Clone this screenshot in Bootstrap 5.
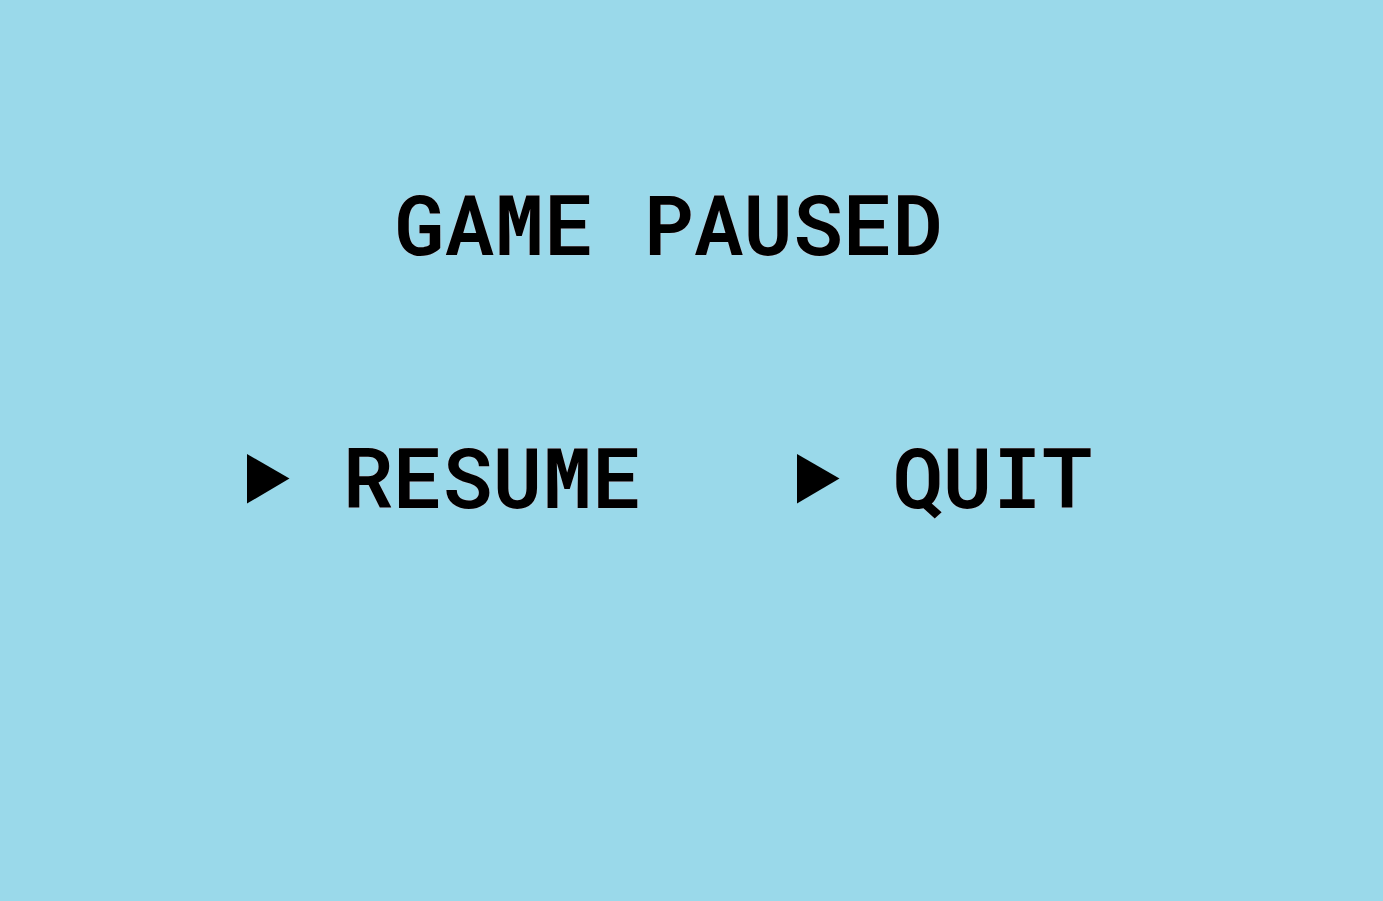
<!DOCTYPE html>
<html lang="en">
<head>
<meta charset="utf-8">
<meta name="viewport" content="width=device-width, initial-scale=1">
<title>Game Paused</title>
<link href="https://cdn.jsdelivr.net/npm/bootstrap@5.3.0/dist/css/bootstrap.min.css" rel="stylesheet">
<style>
body { background: #9ad9ea; color: #000; font-family: "Roboto Mono", "DejaVu Sans Mono", monospace; }
.pause-screen { padding-top: 173px; padding-right: 46px; }
.pause-text { font-size: 83px; line-height: 100px; font-weight: 600; text-shadow: 0 0 1px #f3c6cd; }
.pause-menu { margin-top: 153px; gap: 153px; }
.menu-choice { color: #000; gap: 48px; }
.menu-arrow { width: 50px; height: 56px; }
</style>
</head>
<body>
<main class="pause-screen min-vh-100 d-flex flex-column align-items-center">
<h1 class="pause-text m-0">GAME PAUSED</h1>
<nav class="pause-menu d-flex" aria-label="Pause menu">
<button type="button" class="menu-choice pause-text btn border-0 rounded-0 p-0 d-flex align-items-center"><svg class="menu-arrow" viewBox="0 0 50 56" aria-hidden="true"><path d="M2 6 44.500 30.500 2 55.500Z"/></svg><span>RESUME</span></button>
<button type="button" class="menu-choice pause-text btn border-0 rounded-0 p-0 d-flex align-items-center"><svg class="menu-arrow" viewBox="0 0 50 56" aria-hidden="true"><path d="M2 6 44.500 30.500 2 55.500Z"/></svg><span>QUIT</span></button>
</nav>
</main>
<script src="https://cdn.jsdelivr.net/npm/bootstrap@5.3.0/dist/js/bootstrap.bundle.min.js"></script>
</body>
</html>
